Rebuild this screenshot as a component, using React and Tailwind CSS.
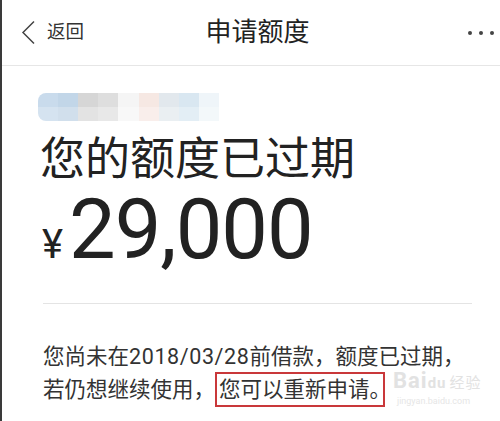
const CJK = "font-['Roboto','Noto_Sans_CJK_SC',sans-serif]";

const BLUR_TOP = ['#c9dbec', '#c2d6e8', '#d6d6d6', '#dedede', '#f5f5f5', '#f6e8e3', '#e2e8ed', '#d9e7f1', '#eff5f9'];
const BLUR_BOT = ['#d5e3f0', '#d1dfec', '#e3e3e3', '#e8e8e8', '#f8f8f8', '#f9eeeb', '#eaeff2', '#e3eef5', '#f3f8fa'];

function Blurred() {
  return (
    <div className="ml-[36px] w-[181px] h-[28px] rounded-l-[8px] overflow-hidden flex flex-col blur-[0.6px]">
      {[BLUR_TOP, BLUR_BOT].map((row, i) => (
        <div key={i} className="flex flex-1">
          {row.map((c, j) => (
            <div key={j} className="flex-1" style={{ background: c }} />
          ))}
        </div>
      ))}
    </div>
  );
}

export default function App() {
  return (
    <div className={`w-[500px] h-[421px] bg-white flex overflow-hidden ${CJK}`}>
      <div className="w-[2px] bg-[#3a3a3a] shrink-0" />
      <div className="flex-1 flex flex-col">
        {/* Header */}
        <div className="h-[66px] border-b border-[#e6e6e6] flex items-center justify-between pl-[19px] pr-[6px] text-[#333]">
          <div className="flex items-center gap-[11px] w-[120px]">
            <svg width="15" height="25" viewBox="0 0 15 25" fill="none">
              <path d="M13 1.5 L2 12.5 L13 23.5" stroke="#444" strokeWidth="1.5" />
            </svg>
            <span className="text-[18.5px]">返回</span>
          </div>
          <span className="text-[26px] text-[#222]">申请额度</span>
          <div className="w-[120px] flex justify-end gap-[7px]">
            {[0, 1, 2].map(i => (
              <span key={i} className="w-[4px] h-[4px] rounded-full bg-[#444]" />
            ))}
          </div>
        </div>

        {/* Body */}
        <div className="flex flex-col pt-[27px]">
          <Blurred />
          <div className="ml-[38px] mt-[13px] text-[45px] leading-[52px] text-[#222]">您的额度已过期</div>
          <div className="ml-[40px] flex items-baseline text-[#222]">
            <span className="text-[40px] mr-[6px]">¥</span>
            <span className="text-[83px] leading-[88px] tracking-[-1px]">29,000</span>
          </div>
          <div className="ml-[41px] mr-[28px] mt-[28px] border-t border-[#e4e4e4]" />
          <div className="ml-[41px] mt-[36px] text-[21.5px] leading-[33px] text-[#333]">
            <div>您尚未在<span className="tracking-[0.6px]">2018/03/28</span>前借款，额度已过期，</div>
            <div className="relative flex items-center h-[33px] whitespace-nowrap">
              <span>若仍想继续使用，</span>
              <span className="w-[170px] h-[35px] border-2 border-[#c9383a] pl-[2px] flex items-center overflow-visible">您可以重新申请。</span>
              <div className="absolute left-[350px] top-[-4px] flex flex-col items-start text-[#e2e2e2]">
                <span className="text-[22px] leading-[24px] font-bold tracking-[1px]">
                  Bai<span className="text-[15px]">du</span><span className="text-[15px] font-normal ml-[3px]">经验</span>
                </span>
                <span className="text-[9px] leading-[12px] ml-[4px] text-[#e6e6e6]">jingyan.baidu.com</span>
              </div>
            </div>
          </div>
        </div>
      </div>
    </div>
  );
}
